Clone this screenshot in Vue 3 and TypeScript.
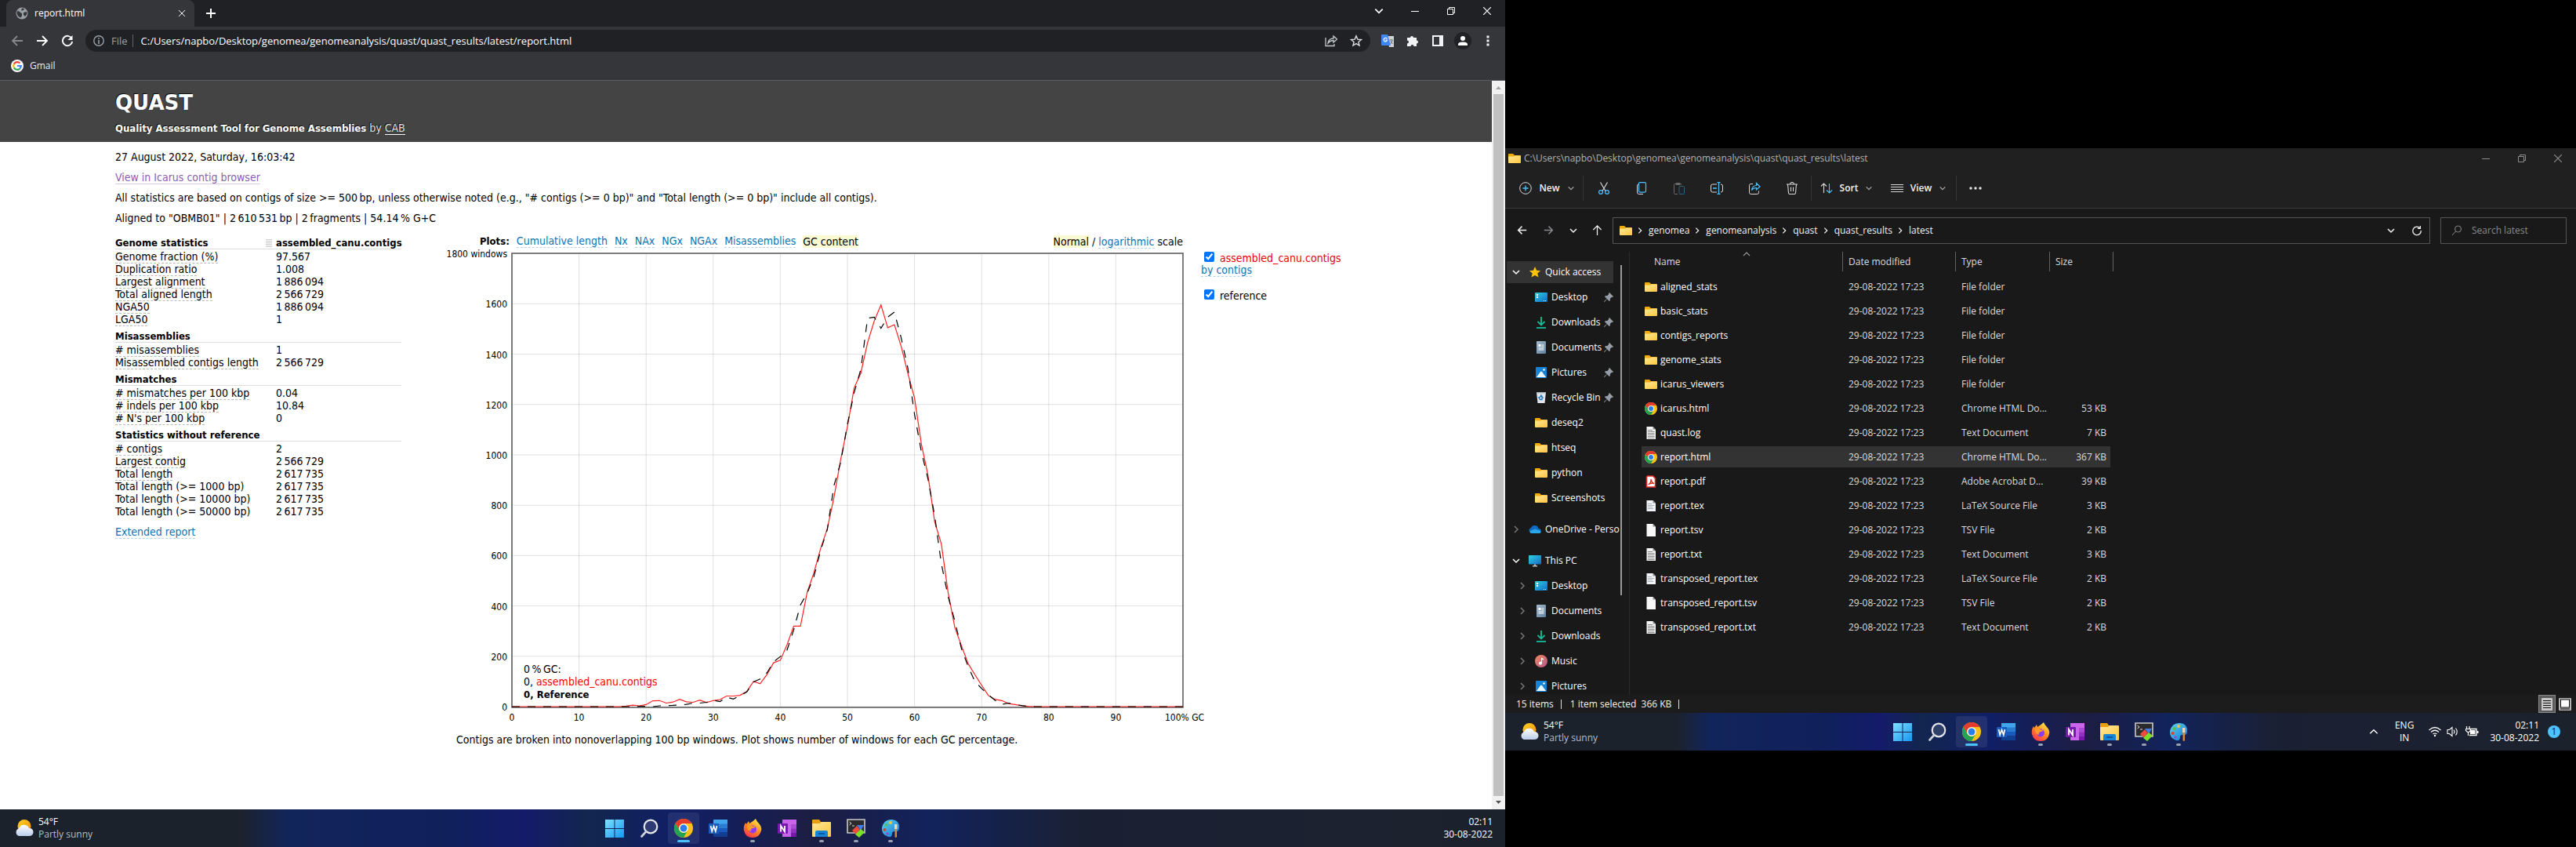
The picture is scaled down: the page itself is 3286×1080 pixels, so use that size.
<script setup lang="ts">
import { ref } from 'vue'

interface StatRow { label: string; value: string; plain?: boolean }
interface StatGroup { title: string; rows: StatRow[] }

const groups: StatGroup[] = [
  {
    title: 'Genome statistics',
    rows: [
      { label: 'Genome fraction (%)', value: '97.567' },
      { label: 'Duplication ratio', value: '1.008' },
      { label: 'Largest alignment', value: '1 886 094' },
      { label: 'Total aligned length', value: '2 566 729' },
      { label: 'NGA50', value: '1 886 094' },
      { label: 'LGA50', value: '1' },
    ],
  },
  {
    title: 'Misassemblies',
    rows: [
      { label: '# misassemblies', value: '1' },
      { label: 'Misassembled contigs length', value: '2 566 729' },
    ],
  },
  {
    title: 'Mismatches',
    rows: [
      { label: '# mismatches per 100 kbp', value: '0.04' },
      { label: '# indels per 100 kbp', value: '10.84' },
      { label: "# N's per 100 kbp", value: '0' },
    ],
  },
  {
    title: 'Statistics without reference',
    rows: [
      { label: '# contigs', value: '2' },
      { label: 'Largest contig', value: '2 566 729' },
      { label: 'Total length', value: '2 617 735' },
      { label: 'Total length (>= 1000 bp)', value: '2 617 735', plain: true },
      { label: 'Total length (>= 10000 bp)', value: '2 617 735', plain: true },
      { label: 'Total length (>= 50000 bp)', value: '2 617 735', plain: true },
    ],
  },
]
const thin = (value: string) => value.replace(/ /g, '\u2009')

const plots = ['Cumulative length', 'Nx', 'NAx', 'NGx', 'NGAx', 'Misassemblies']
const showContigs = ref(true)
const showReference = ref(true)

// Windows per GC percentage, starting at 16 %; zero before and after.
const firstPercent = 16
const contigs = [
  0, 2, 6, 3, 8, 23, 24, 14, 18, 29, 19, 17, 26, 16, 24, 28, 42, 42, 45, 60, 100, 91, 127, 174, 184, 246, 320, 320,
  454, 531, 628, 707, 832, 982, 1112, 1266, 1325, 1446, 1532, 1596, 1505, 1517, 1432, 1325, 1226, 1045, 920, 734,
  646, 454, 314, 241, 170, 127, 85, 44, 29, 24, 12, 8, 3, 1, 0,
]
const reference = [
  0, 0, 0, 1, 1, 0, 3, 4, 5, 7, 9, 14, 14, 17, 25, 20, 38, 30, 44, 58, 98, 110, 134, 178, 199, 225, 305, 404,
  450, 516, 620, 703, 879, 970, 1122, 1247, 1340, 1543, 1547, 1503, 1547, 1567, 1465, 1346, 1161, 1014, 905, 758,
  568, 438, 340, 230, 158, 100, 72, 47, 25, 9, 14, 8, 4, 1, 0,
]
const plot = { left: 88, top: 6, width: 856, height: 579, perWindow: 0.321 }
const px = (p: number) => plot.left + (p * plot.width) / 100
const py = (v: number) => plot.top + plot.height - 1 - v * plot.perWindow
function line(values: number[]): string {
  const points = values.map((v, i) => `${px(firstPercent + i).toFixed(1)},${py(v).toFixed(1)}`)
  return [`${px(0)},${py(0)}`, ...points, `${px(100)},${py(0)}`].join(' ')
}
const yTicks = [0, 200, 400, 600, 800, 1000, 1200, 1400, 1600]
const xTicks = [0, 10, 20, 30, 40, 50, 60, 70, 80, 90]

interface NavItem { label: string; icon: string; level: number; arrow?: string; pin?: boolean; gap?: boolean; active?: boolean }
const nav: NavItem[] = [
  { label: 'Quick access', icon: 'star', level: 0, arrow: 'down', active: true },
  { label: 'Desktop', icon: 'desktop', level: 1, pin: true },
  { label: 'Downloads', icon: 'download', level: 1, pin: true },
  { label: 'Documents', icon: 'document', level: 1, pin: true },
  { label: 'Pictures', icon: 'picture', level: 1, pin: true },
  { label: 'Recycle Bin', icon: 'bin', level: 1, pin: true },
  { label: 'deseq2', icon: 'folder', level: 1 },
  { label: 'htseq', icon: 'folder', level: 1 },
  { label: 'python', icon: 'folder', level: 1 },
  { label: 'Screenshots', icon: 'folder', level: 1 },
  { label: 'OneDrive - Perso', icon: 'cloud', level: 0, arrow: 'right', gap: true },
  { label: 'This PC', icon: 'pc', level: 0, arrow: 'down', gap: true },
  { label: 'Desktop', icon: 'desktop', level: 1, arrow: 'right' },
  { label: 'Documents', icon: 'document', level: 1, arrow: 'right' },
  { label: 'Downloads', icon: 'download', level: 1, arrow: 'right' },
  { label: 'Music', icon: 'music', level: 1, arrow: 'right' },
  { label: 'Pictures', icon: 'picture', level: 1, arrow: 'right' },
]

interface FileRow { name: string; icon: string; type: string; size: string; selected?: boolean }
const modified = '29-08-2022 17:23'
const files: FileRow[] = [
  { name: 'aligned_stats', icon: 'folder', type: 'File folder', size: '' },
  { name: 'basic_stats', icon: 'folder', type: 'File folder', size: '' },
  { name: 'contigs_reports', icon: 'folder', type: 'File folder', size: '' },
  { name: 'genome_stats', icon: 'folder', type: 'File folder', size: '' },
  { name: 'icarus_viewers', icon: 'folder', type: 'File folder', size: '' },
  { name: 'icarus.html', icon: 'chrome', type: 'Chrome HTML Do...', size: '53 KB' },
  { name: 'quast.log', icon: 'text', type: 'Text Document', size: '7 KB' },
  { name: 'report.html', icon: 'chrome', type: 'Chrome HTML Do...', size: '367 KB', selected: true },
  { name: 'report.pdf', icon: 'pdf', type: 'Adobe Acrobat D...', size: '39 KB' },
  { name: 'report.tex', icon: 'tex', type: 'LaTeX Source File', size: '3 KB' },
  { name: 'report.tsv', icon: 'blank', type: 'TSV File', size: '2 KB' },
  { name: 'report.txt', icon: 'text', type: 'Text Document', size: '3 KB' },
  { name: 'transposed_report.tex', icon: 'tex', type: 'LaTeX Source File', size: '2 KB' },
  { name: 'transposed_report.tsv', icon: 'blank', type: 'TSV File', size: '2 KB' },
  { name: 'transposed_report.txt', icon: 'text', type: 'Text Document', size: '2 KB' },
]

const crumbs = ['genomea', 'genomeanalysis', 'quast', 'quast_results', 'latest']

interface TaskApp { id: string; name: string; state?: string }
const apps: TaskApp[] = [
  { id: 'windows', name: 'Start' },
  { id: 'search', name: 'Search' },
  { id: 'chrome', name: 'Google Chrome', state: 'active' },
  { id: 'word', name: 'Word' },
  { id: 'firefox', name: 'Firefox', state: 'open' },
  { id: 'onenote', name: 'OneNote' },
  { id: 'explorer', name: 'File Explorer', state: 'open' },
  { id: 'terminal', name: 'Terminal', state: 'open' },
  { id: 'paint', name: 'Paint', state: 'open' },
]
</script>

<template>
  <svg class="sprites" aria-hidden="true">
    <defs>
      <linearGradient id="gFolder" x1="0" y1="0" x2="1" y2="1">
        <stop offset="0" stop-color="#ffe69a" /><stop offset="1" stop-color="#ffc83d" />
      </linearGradient>
      <linearGradient id="gTeal" x1="0" y1="0" x2="1" y2="1">
        <stop offset="0" stop-color="#2fd3e0" /><stop offset="1" stop-color="#1268c8" />
      </linearGradient>
      <linearGradient id="gDoc" x1="0" y1="0" x2="1" y2="1">
        <stop offset="0" stop-color="#a9bccf" /><stop offset="1" stop-color="#5f7f9f" />
      </linearGradient>
      <linearGradient id="gMusic" x1="0" y1="0" x2="1" y2="1">
        <stop offset="0" stop-color="#f08a5d" /><stop offset="1" stop-color="#b8568f" />
      </linearGradient>
      <linearGradient id="gWin" x1="0" y1="0" x2="1" y2="1">
        <stop offset="0" stop-color="#7fe0ff" /><stop offset="1" stop-color="#1498f0" />
      </linearGradient>
      <linearGradient id="gFox" x1="0.8" y1="0" x2="0.2" y2="1">
        <stop offset="0" stop-color="#fff04a" /><stop offset="0.5" stop-color="#ff8a1f" /><stop offset="1" stop-color="#ff2d55" />
      </linearGradient>
      <linearGradient id="gPaint" x1="0" y1="0" x2="1" y2="1">
        <stop offset="0" stop-color="#5fd3f5" /><stop offset="1" stop-color="#1277d0" />
      </linearGradient>
      <linearGradient id="gSun" x1="0" y1="0" x2="1" y2="1">
        <stop offset="0" stop-color="#ffd21f" /><stop offset="1" stop-color="#f08a10" />
      </linearGradient>
      <linearGradient id="gCloud" x1="0" y1="0" x2="0" y2="1">
        <stop offset="0" stop-color="#ffffff" /><stop offset="1" stop-color="#b9cdea" />
      </linearGradient>
    </defs>
    <symbol id="i-folder" viewBox="0 0 16 16">
      <path d="M0 3a1 1 0 0 1 1-1h5l2 2h7a1 1 0 0 1 1 1v8H0z" fill="#f3a90a" />
      <path d="M0 5.500h7L8.500 4.500H15a1 1 0 0 1 1 1V13a1 1 0 0 1-1 1H1a1 1 0 0 1-1-1z" fill="url(#gFolder)" />
    </symbol>
    <symbol id="i-star" viewBox="0 0 16 16">
      <path d="M8 1l2.100 4.700 5 .5-3.800 3.400 1.200 5L8 12l-4.500 2.600 1.200-5L.9 6.200l5-.5z" fill="#fcc20a" />
    </symbol>
    <symbol id="i-desktop" viewBox="0 0 16 16">
      <rect y="2" width="16" height="12" rx="1" fill="url(#gTeal)" />
      <path d="M2 4h2v2H2zM2 7h2v2H2z" fill="#fff" /><path d="M11 12h1v1h-1zM13 12h1v1h-1z" fill="#fff" />
    </symbol>
    <symbol id="i-download" viewBox="0 0 16 16">
      <path d="M3.500 7L8 11.500 12.500 7" fill="none" stroke="#1cb496" stroke-width="1.800" />
      <path d="M2 14h12v2H2z" fill="#17a88f" /><path d="M7.100 1h1.800v10H7.100z" fill="#1fbf8f" />
    </symbol>
    <symbol id="i-document" viewBox="0 0 16 16">
      <rect x="2" width="12" height="16" rx="1" fill="url(#gDoc)" />
      <path d="M4.500 4h3v3h-3zM8.500 4.500h3v1h-3zM8.500 6.500h3v1h-3zM4.500 8.500h7v1h-7zM4.500 10.500h7v1h-7z" fill="#fff" />
    </symbol>
    <symbol id="i-picture" viewBox="0 0 16 16">
      <rect x="1" y="1" width="14" height="14" rx="1" fill="#1583d8" /><path d="M2 14l5-7q1-1 2 0l5 7z" fill="#e9f6ff" />
      <circle cx="11.500" cy="4.500" r="1.300" fill="#fff" />
    </symbol>
    <symbol id="i-bin" viewBox="0 0 16 16">
      <path d="M2 1h12l-1.500 14h-9z" fill="#dfe5ea" /><path d="M2 1h12v1.500H2z" fill="#aeb7bf" />
      <path d="M8 5l2 3H9v2.500H6.500L5 8h1z" fill="none" stroke="#1a78d0" stroke-width="1.300" />
    </symbol>
    <symbol id="i-cloud" viewBox="0 0 16 16">
      <path d="M3.500 13A3.500 3.500 0 0 1 3 6.200 5 5 0 0 1 12.500 7 3 3 0 0 1 13 13z" fill="#0f6cc4" />
      <path d="M3 13q-2-1-1-3l6-2.500 4 1.500q4 .5 3.500 2.500-.5 1.500-2.500 1.500z" fill="#28a8ea" />
    </symbol>
    <symbol id="i-pc" viewBox="0 0 16 16">
      <rect y="1" width="16" height="11.500" rx="1" fill="url(#gTeal)" /><path d="M7 12.500h2V14h2v1.500H5V14h2z" fill="#b8c4cc" />
    </symbol>
    <symbol id="i-music" viewBox="0 0 16 16">
      <circle cx="8" cy="8" r="8" fill="url(#gMusic)" /><path d="M8 3.500l3 1.500v1.500L9 5.700V10.500a2 2 0 1 1-1-1.600z" fill="#fff" />
    </symbol>
    <symbol id="i-chrome" viewBox="0 0 24 24">
      <circle cx="12" cy="12" r="12" fill="#fbc116" />
      <path d="M1.600 6A12 12 0 0 1 22.400 6H12a6 6 0 0 0-5.200 9z" fill="#e33b2e" />
      <path d="M1.600 6A12 12 0 0 0 12 24l5.200-9A6 6 0 0 1 6.800 15z" fill="#23a455" />
      <circle cx="12" cy="12" r="5.800" fill="#fff" /><circle cx="12" cy="12" r="4.500" fill="#2b7de9" />
    </symbol>
    <symbol id="i-blank" viewBox="0 0 16 16">
      <path d="M2.500 0h8L14 3.500V16H2.500z" fill="#f7f7f7" /><path d="M10.500 0L14 3.500h-3.500z" fill="#8d8d8d" />
    </symbol>
    <symbol id="i-text" viewBox="0 0 16 16">
      <path d="M2.500 0h8L14 3.500V16H2.500z" fill="#f4f4f4" /><path d="M10.500 0L14 3.500h-3.500z" fill="#8d8d8d" />
      <path d="M4 4.500h6M4 6.500h8.500M4 8.500h8.500M4 10.500h8.500M4 12.500h8.500M4 14.500h8.500" stroke="#888" />
    </symbol>
    <symbol id="i-tex" viewBox="0 0 16 16">
      <path d="M2.500 1h8L14 4.500V15H2.500z" fill="#f0f2f5" /><path d="M10.500 1L14 4.500h-3.500z" fill="#8d8d8d" />
      <path d="M4 5.500h5M4 7.500h8M4 9.500h6M4 11.500h7" stroke="#aab2bc" />
    </symbol>
    <symbol id="i-pdf" viewBox="0 0 16 16">
      <path d="M3.500 1h7l3 3v11h-11V2z" fill="#fff" stroke="#e02b20" stroke-width="1.600" />
      <path d="M4.500 12q4-2 3.500-7 1 5 4 5.500-4-1-7.500 1.500z" fill="#fff" stroke="#e02b20" stroke-width="1.300" />
    </symbol>
    <symbol id="i-pin" viewBox="0 0 12 12">
      <path d="M7 0l5 5-1 1-1-.3L7.800 8 8 10 6.800 11 4 8.200.8 12 0 11.200 3.800 8 1 5.200 2 4l2 .2L6.300 2 6 1z" fill="#949ea8" />
    </symbol>
    <symbol id="i-windows" viewBox="0 0 24 24">
      <path d="M0 1h11.500v11H0zM12.500 1H24v11H12.500zM0 13h11.500v11H0zM12.500 13H24v11H12.500z" fill="url(#gWin)" />
    </symbol>
    <symbol id="i-search" viewBox="0 0 24 24">
      <circle cx="14" cy="10" r="8.300" fill="#ffffff20" stroke="#e3e4ea" stroke-width="2.200" />
      <path d="M8 16.500l-5.500 6" stroke="#d0d2d8" stroke-width="2.600" stroke-linecap="round" />
    </symbol>
    <symbol id="i-word" viewBox="0 0 24 24">
      <path d="M6 1h18v6H6z" fill="#41a5ee" /><path d="M6 6.500h18V12H6z" fill="#2b7cd3" />
      <path d="M6 12h18v5.500H6z" fill="#185abd" /><path d="M6 17.500h18V23H6z" fill="#103f91" />
      <rect y="6" width="13" height="13" rx="1" fill="#185abd" />
      <path d="M2.500 9l1.700 7 2.300-6.500L8.800 16l1.700-7" fill="none" stroke="#fff" stroke-width="1.700" />
    </symbol>
    <symbol id="i-firefox" viewBox="0 0 24 24">
      <path d="M16 0q1 3 4 6 4 4 3 9-2 9-11 9T1 15q-1-5 2-10l1 2 3-4 1 3q5-3 8-6z" fill="url(#gFox)" />
      <circle cx="12" cy="13.500" r="5" fill="#8a3df0" /><path d="M5 9q4-2 6 0 2 1 5 0-1 3-4 3-3 1-2 4-5-1-5-7z" fill="#ff9b2a" />
    </symbol>
    <symbol id="i-onenote" viewBox="0 0 24 24">
      <path d="M6 1h18v22H6z" fill="#ca64ea" /><path d="M17 7h7v5.500h-7z" fill="#ae4bd5" />
      <path d="M17 12.500h7V18h-7z" fill="#9332bf" /><path d="M17 18h7v5h-7z" fill="#7719aa" />
      <rect y="6" width="13" height="13" rx="1" fill="#7719aa" />
      <path d="M4 16.500V9l5 7.500V9" fill="none" stroke="#fff" stroke-width="1.800" />
    </symbol>
    <symbol id="i-explorer" viewBox="0 0 24 24">
      <path d="M0 2a1 1 0 0 1 1-1h8l2 3h12v8H0z" fill="#e9a010" />
      <path d="M0 6h10l1.500-2H23a1 1 0 0 1 1 1v17a1 1 0 0 1-1 1H1a1 1 0 0 1-1-1z" fill="url(#gFolder)" />
      <path d="M4 23v-6q0-2 2-2h12q2 0 2 2v6z" fill="#1685d8" /><path d="M8 18h8v2H8z" fill="#0c58a4" />
    </symbol>
    <symbol id="i-terminal" viewBox="0 0 24 24">
      <path d="M1 1h22v17H1z" fill="#2b2b2e" stroke="#c9c9c9" stroke-width="1.600" />
      <path d="M3.500 4l2.500 2-2.500 2M7 9h3" fill="none" stroke="#ddd" />
      <path d="M13 8h9l-4 7z" fill="#3f7df0" /><path d="M7 15l6-6 4 5-5 6z" fill="#f04a3c" /><path d="M11 20l7-7 5 4-7 7z" fill="#7ae02a" />
    </symbol>
    <symbol id="i-paint" viewBox="0 0 24 24">
      <path d="M14 1Q24 2 23 12q-.5 5-5 4-4-.5-4 3 0 5-5 4Q0 20 1 11 4 0 14 1z" fill="url(#gPaint)" />
      <circle cx="12" cy="5" r="2" fill="#f7c62a" /><circle cx="6.500" cy="8" r="2" fill="#4fc24a" />
      <circle cx="4.500" cy="14" r="2" fill="#d8452e" /><circle cx="8" cy="19" r="1.800" fill="#8a4fd0" />
      <path d="M17.500 13h2.500v10q-1.200 2-2.500 0z" fill="#d88a3a" /><path d="M17 7h3.500v6H17z" fill="#e9d5b8" />
    </symbol>
    <symbol id="i-weather" viewBox="0 0 24 24">
      <circle cx="12" cy="9.500" r="8.500" fill="url(#gSun)" />
      <path d="M5 22A5 5 0 0 1 5 12.500 7 7 0 0 1 18 12 5 5 0 0 1 19 22z" fill="url(#gCloud)" />
    </symbol>
    <symbol id="i-left" viewBox="0 0 16 16"><path d="M15 8H2M8 2L2 8l6 6" fill="none" stroke="currentColor" stroke-width="1.800" /></symbol>
    <symbol id="i-right" viewBox="0 0 16 16"><path d="M1 8h13M8 2l6 6-6 6" fill="none" stroke="currentColor" stroke-width="1.800" /></symbol>
    <symbol id="i-up" viewBox="0 0 16 16"><path d="M8 15V2M2.500 7.500L8 2l5.500 5.500" fill="none" stroke="currentColor" stroke-width="1.300" /></symbol>
    <symbol id="i-chevdown" viewBox="0 0 12 12"><path d="M2 4l4 4 4-4" fill="none" stroke="currentColor" stroke-width="1.500" /></symbol>
    <symbol id="i-chevright" viewBox="0 0 12 12"><path d="M4 2l4 4-4 4" fill="none" stroke="currentColor" stroke-width="1.500" /></symbol>
    <symbol id="i-chevup" viewBox="0 0 12 12"><path d="M2 8l4-4 4 4" fill="none" stroke="currentColor" stroke-width="1.200" /></symbol>
    <symbol id="i-reload" viewBox="0 0 16 16">
      <path d="M13.500 5A6.200 6.200 0 1 0 14.200 9" fill="none" stroke="currentColor" stroke-width="1.900" /><path d="M14.500 1v6h-6z" fill="currentColor" />
    </symbol>
    <symbol id="i-refresh" viewBox="0 0 16 16">
      <path d="M12.500 4.500A6 6 0 1 0 14 8M13 1v4H9" fill="none" stroke="currentColor" stroke-width="1.500" />
    </symbol>
    <symbol id="i-min" viewBox="0 0 10 10"><path d="M0 5.500h10" stroke="currentColor" /></symbol>
    <symbol id="i-restore" viewBox="0 0 10 10"><path d="M.5 2.500h7v7h-7zM2.500 2.500v-2h7v7h-2" fill="none" stroke="currentColor" /></symbol>
    <symbol id="i-close" viewBox="0 0 10 10"><path d="M0 0l10 10M10 0L0 10" stroke="currentColor" stroke-width="1.200" /></symbol>
  </svg>

  <div class="desktops">
    <section class="screen">
      <header class="tabs">
        <div class="tab">
          <svg class="ic16" viewBox="0 0 16 16"><circle cx="8" cy="8" r="7.500" fill="#9aa0a6" /><path d="M2 5q3 0 4 2l2 1v3l-1.500 2.500Q2 12 1.500 8zM8 1.500l3 .5-1 2-3 .5zM10 7l4-1 .5 3-2.500 3-2-2z" fill="#35363a" /></svg>
          <span class="tab-title">report.html</span>
          <button class="plain tab-close" aria-label="Close tab"><svg width="8" height="8"><use href="#i-close" /></svg></button>
        </div>
        <button class="plain new-tab" aria-label="New tab"><svg width="12" height="12" viewBox="0 0 12 12"><path d="M6 0v12M0 6h12" stroke="#fff" stroke-width="2" /></svg></button>
        <div class="win-controls">
          <button class="plain" aria-label="Search tabs"><svg width="14" height="14"><use href="#i-chevdown" /></svg></button>
          <button class="plain" aria-label="Minimize"><svg width="10" height="10"><use href="#i-min" /></svg></button>
          <button class="plain" aria-label="Restore"><svg width="10" height="10"><use href="#i-restore" /></svg></button>
          <button class="plain" aria-label="Close"><svg width="10" height="10"><use href="#i-close" /></svg></button>
        </div>
      </header>
      <div class="toolbar">
        <button class="plain tool dim" aria-label="Back"><svg width="16" height="16"><use href="#i-left" /></svg></button>
        <button class="plain tool" aria-label="Forward"><svg width="16" height="16"><use href="#i-right" /></svg></button>
        <button class="plain tool" aria-label="Reload"><svg width="16" height="16"><use href="#i-reload" /></svg></button>
        <div class="omnibox">
          <svg class="ic14" viewBox="0 0 14 14"><circle cx="7" cy="7" r="6.200" fill="none" stroke="#9aa0a6" stroke-width="1.400" /><path d="M7 3v1.700M7 6v5" stroke="#9aa0a6" stroke-width="1.600" /></svg>
          <span class="scheme">File</span>
          <input class="url" aria-label="Address" value="C:/Users/napbo/Desktop/genomea/genomeanalysis/quast/quast_results/latest/report.html">
          <button class="plain tool" aria-label="Share"><svg width="16" height="16" viewBox="0 0 16 16"><path d="M1 4v10.500h11V12M4 11q1-6 7-6V2l4.500 4L11 10V7.500q-4 0-7 3.500z" fill="none" stroke="#c4c7ca" stroke-width="1.300" /></svg></button>
          <button class="plain tool" aria-label="Bookmark"><svg width="16" height="16" viewBox="0 0 16 16"><path d="M8 1.800l1.800 4.300 4.700.4-3.600 3 1.100 4.600L8 11.600l-4 2.500 1.100-4.600-3.600-3 4.700-.4z" fill="none" stroke="#dadce0" stroke-width="1.400" /></svg></button>
        </div>
        <div class="extensions">
          <button class="plain tool" aria-label="Translate"><svg width="16" height="16" viewBox="0 0 16 16"><path d="M7 2h9v14h-6z" fill="#cfd3d6" /><path d="M10.500 7h4.500M12.500 6v1M11 12q3-1 3-5M11.500 8.500l3 3.500" stroke="#6d7880" fill="none" /><path d="M0 0h8l4 14H1a1 1 0 0 1-1-1z" fill="#4285f4" /><path d="M7.500 5.500A2.300 2.300 0 1 0 7.300 8V7H5.500" fill="none" stroke="#fff" stroke-width="1.200" /></svg></button>
          <button class="plain tool" aria-label="Extensions"><svg width="16" height="16" viewBox="0 0 16 16"><path d="M1 4h4a2 2 0 1 1 4 0h4v3.500a2 2 0 1 1 0 4V15H9.500a2 2 0 0 0-4 0H1v-3.500a2 2 0 0 0 0-4z" fill="#f1f3f4" /></svg></button>
          <button class="plain tool" aria-label="Side panel"><svg width="14" height="14" viewBox="0 0 14 14"><path d="M0 0h14v14H0zM2 2v10h7V2z" fill="#f1f3f4" fill-rule="evenodd" /></svg></button>
          <button class="plain tool" aria-label="Profile"><svg width="22" height="22" viewBox="0 0 22 22"><circle cx="11" cy="11" r="11" fill="#202124" /><circle cx="11" cy="8" r="3" fill="#fff" /><path d="M5 17v-1.500q0-3 6-3t6 3V17z" fill="#fff" /></svg></button>
          <button class="plain tool" aria-label="Menu"><svg width="4" height="14" viewBox="0 0 4 14"><path d="M.5.500h3v3h-3zM.5 5.500h3v3h-3zM.5 10.500h3v3h-3z" fill="#f1f3f4" /></svg></button>
        </div>
      </div>
      <nav class="bookmarks">
        <a href="#" class="bookmark">
          <svg class="ic16" viewBox="0 0 16 16"><circle cx="8" cy="8" r="8" fill="#fff" /><g fill="none" stroke-width="2.200"><path d="M3.800 5.600A4.800 4.800 0 0 1 11.400 4.600" stroke="#ea4335" /><path d="M3.800 5.600a4.800 4.800 0 0 0 0 4.800" stroke="#fbbc05" /><path d="M3.800 10.400a4.800 4.800 0 0 0 7.400 1.200" stroke="#34a853" /><path d="M11.200 11.600A4.800 4.800 0 0 0 12.800 8H8" stroke="#4285f4" /></g></svg>
          Gmail
        </a>
      </nav>

      <div class="viewport">
        <main class="report">
          <header class="banner">
            <h1>QUAST</h1>
            <p><strong>Quality Assessment Tool for Genome Assemblies</strong> by <a href="#">CAB</a></p>
          </header>
          <div class="intro">
            <p>27 August 2022, Saturday, 16:03:42</p>
            <p><a href="#" class="visited">View in Icarus contig browser</a></p>
            <p>All statistics are based on contigs of size &gt;= 500&thinsp;bp, unless otherwise noted (e.g., "# contigs (&gt;= 0 bp)" and "Total length (&gt;= 0 bp)" include all contigs).</p>
            <p>Aligned to "OBMB01" | 2&thinsp;610&thinsp;531&thinsp;bp | 2&thinsp;fragments | 54.14&thinsp;% G+C</p>
          </div>
          <div class="results">
            <div class="stats">
              <table>
                <colgroup><col class="c-label"><col></colgroup>
                <tbody v-for="(g, gi) in groups" :key="g.title">
                  <tr class="group">
                    <th scope="col">{{ g.title }}</th>
                    <th scope="col"><span v-if="gi === 0" class="assembly"><i class="grip"></i>assembled_canu.contigs</span></th>
                  </tr>
                  <tr v-for="r in g.rows" :key="r.label">
                    <td><span :class="{ hint: !r.plain }">{{ r.label }}</span></td>
                    <td>{{ thin(r.value) }}</td>
                  </tr>
                </tbody>
              </table>
              <a href="#" class="dashed">Extended report</a>
            </div>
            <div class="plot">
              <div class="plot-nav">
                <strong>Plots:</strong>
                <a v-for="p in plots" :key="p" href="#" class="dashed">{{ p }}</a>
                <span class="mark">GC content</span>
                <span class="scale"><span class="mark">Normal</span> / <a href="#" class="dashed">logarithmic</a> scale</span>
              </div>
              <svg class="chart" viewBox="0 0 980 606" role="img" aria-label="GC content plot">
                <g class="grid">
                  <line v-for="t in yTicks" :key="'h' + t" :x1="plot.left" :x2="plot.left + plot.width" :y1="py(t)" :y2="py(t)" />
                  <line v-for="t in xTicks" :key="'v' + t" :x1="px(t)" :x2="px(t)" :y1="plot.top" :y2="plot.top + plot.height" />
                </g>
                <rect class="frame" :x="plot.left" :y="plot.top" :width="plot.width" :height="plot.height" />
                <polyline v-if="showContigs" :points="line(contigs)" class="red" />
                <polyline v-if="showReference" :points="line(reference)" class="ref" />
                <g class="tick end">
                  <text v-for="t in yTicks" :key="'y' + t" x="82" :y="py(t) + 5">{{ t }}</text>
                  <text x="82" y="11">1800 windows</text>
                </g>
                <g class="tick mid">
                  <text v-for="t in xTicks" :key="'x' + t" :x="px(t)" y="602">{{ t }}</text>
                  <text x="946" y="602">100% GC</text>
                </g>
                <g class="tip">
                  <text x="103" y="541">0&#8201;%&#8201;GC:</text>
                  <text x="103" y="557">0, <tspan fill="#f00">assembled_canu.contigs</tspan></text>
                  <text x="103" y="573" class="strong">0, Reference</text>
                </g>
              </svg>
              <p class="caption">Contigs are broken into nonoverlapping 100 bp windows. Plot shows number of windows for each GC percentage.</p>
            </div>
            <div class="legend">
              <label class="red-label"><input v-model="showContigs" type="checkbox">assembled_canu.contigs</label>
              <a href="#" class="dashed">by contigs</a>
              <label><input v-model="showReference" type="checkbox">reference</label>
            </div>
          </div>
        </main>
        <div class="scrollbar" aria-hidden="true">
          <svg width="17" height="17" viewBox="0 0 17 17"><path d="M5 11l3.500-4 3.500 4z" fill="#a3a3a3" /></svg>
          <div class="thumb"></div>
          <svg width="17" height="17" viewBox="0 0 17 17"><path d="M5 6l3.500 4L12 6z" fill="#505050" /></svg>
        </div>
      </div>

      <footer class="taskbar">
        <div class="weather">
          <svg width="24" height="24"><use href="#i-weather" /></svg>
          <span>54°F<br><small>Partly sunny</small></span>
        </div>
        <div class="apps">
          <button v-for="a in apps" :key="a.id" :class="['plain', 'app', a.state]" :aria-label="a.name"><svg width="24" height="24"><use :href="'#i-' + a.id" /></svg></button>
        </div>
        <div class="tray"><span class="clock">02:11<br>30-08-2022</span></div>
      </footer>
    </section>

    <section class="screen second">
      <div class="explorer">
        <header class="titlebar">
          <svg class="ic16"><use href="#i-folder" /></svg>
          <span>C:\Users\napbo\Desktop\genomea\genomeanalysis\quast\quast_results\latest</span>
          <div class="win-controls">
            <button class="plain" aria-label="Minimize"><svg width="10" height="10"><use href="#i-min" /></svg></button>
            <button class="plain" aria-label="Restore"><svg width="10" height="10"><use href="#i-restore" /></svg></button>
            <button class="plain" aria-label="Close"><svg width="10" height="10"><use href="#i-close" /></svg></button>
          </div>
        </header>
        <div class="commands">
          <button class="plain command new"><svg width="16" height="16" viewBox="0 0 16 16" fill="none"><circle cx="8" cy="8" r="7.300" stroke="#d8d8d8" /><path d="M8 4.500v7M4.500 8h7" stroke="#4cc2ff" stroke-width="1.300" /></svg>New<svg class="chev" width="10" height="10"><use href="#i-chevdown" /></svg></button>
          <button class="plain icon-command" aria-label="Cut"><svg width="16" height="16" viewBox="0 0 16 16" fill="none"><path d="M3.500.5l6.500 11M12.500.5L6 11.500" stroke="#d8d8d8" stroke-width="1.200" /><circle cx="4" cy="13" r="2.400" stroke="#4cc2ff" stroke-width="1.200" /><circle cx="12" cy="13" r="2.400" stroke="#4cc2ff" stroke-width="1.200" /></svg></button>
          <button class="plain icon-command" aria-label="Copy"><svg width="16" height="16" viewBox="0 0 16 16" fill="none"><path d="M4 3Q2.500 3 2.500 5v8q0 2.500 2 2.500H10" stroke="#d8d8d8" /><rect x="4.500" y=".6" width="9" height="12.500" rx="1.500" stroke="#4cc2ff" stroke-width="1.200" /></svg></button>
          <button class="plain icon-command faded" aria-label="Paste"><svg width="16" height="16" viewBox="0 0 16 16" fill="none"><path d="M6 15.500H2.500q-1 0-1-1v-11q0-1 1-1H10q1 0 1 1M4 3.500v-2h5v2z" stroke="#d8d8d8" /><rect x="8" y="5.500" width="6.500" height="10" rx="1" stroke="#4cc2ff" /></svg></button>
          <button class="plain icon-command" aria-label="Rename"><svg width="16" height="16" viewBox="0 0 16 16" fill="none"><path d="M8 13H2.500Q.5 13 .5 11V5q0-2 2-2H8M13 3q2.500 0 2.500 2v6q0 2-2.500 2" stroke="#d8d8d8" /><path d="M10.500.5v15M8.500.5h4M8.500 15.500h4M3 8h5" stroke="#4cc2ff" stroke-width="1.300" /></svg></button>
          <button class="plain icon-command" aria-label="Share"><svg width="16" height="16" viewBox="0 0 16 16" fill="none"><path d="M6 2.500H3.500q-2 0-2 2v9q0 2 2 2h8q2 0 2-2v-2" stroke="#d8d8d8" /><path d="M4.500 10.500q1-6 6-6V1.500L15 6l-4.500 4V7.500q-4 0-6 3z" stroke="#4cc2ff" stroke-width="1.200" /></svg></button>
          <button class="plain icon-command" aria-label="Delete"><svg width="16" height="16" viewBox="0 0 16 16" fill="none"><path d="M1 3h14M5.500 3q0-2.500 2.500-2.500T10.500 3M2.500 3l1 11q.2 1.500 1.500 1.500h6q1.300 0 1.500-1.500l1-11M6.500 6.500v5.500M9.500 6.500v5.500" stroke="#d8d8d8" stroke-width="1.100" /></svg></button>
          <button class="plain command sort"><svg width="16" height="16" viewBox="0 0 16 16" fill="none"><path d="M4.500 14V2M1 5.500L4.500 2 8 5.500" stroke="#d8d8d8" stroke-width="1.100" /><path d="M11.500 2v12M8 10.500l3.500 3.500 3.500-3.500" stroke="#4cc2ff" stroke-width="1.100" /></svg>Sort<svg class="chev" width="10" height="10"><use href="#i-chevdown" /></svg></button>
          <button class="plain command view"><svg width="16" height="16" viewBox="0 0 16 16"><path d="M0 3.500h16M0 6.500h16M0 9.500h16M0 12.500h16" stroke="#d8d8d8" /></svg>View<svg class="chev" width="10" height="10"><use href="#i-chevdown" /></svg></button>
          <button class="plain more" aria-label="See more"><svg width="16" height="4" viewBox="0 0 16 4" fill="#e4e4e4"><circle cx="2" cy="2" r="1.700" /><circle cx="8" cy="2" r="1.700" /><circle cx="14" cy="2" r="1.700" /></svg></button>
        </div>
        <div class="address-row">
          <button class="plain nav-btn" aria-label="Back"><svg width="13" height="13"><use href="#i-left" /></svg></button>
          <button class="plain nav-btn dim" aria-label="Forward"><svg width="13" height="13"><use href="#i-right" /></svg></button>
          <button class="plain nav-btn narrow" aria-label="Recent"><svg width="12" height="12"><use href="#i-chevdown" /></svg></button>
          <button class="plain nav-btn narrow" aria-label="Up"><svg width="15" height="15"><use href="#i-up" /></svg></button>
          <div class="path">
            <svg class="ic16"><use href="#i-folder" /></svg>
            <template v-for="c in crumbs" :key="c">
              <svg class="sep" width="10" height="10"><use href="#i-chevright" /></svg>
              <button class="plain">{{ c }}</button>
            </template>
            <button class="plain path-tool first" aria-label="Previous locations"><svg width="12" height="12"><use href="#i-chevdown" /></svg></button>
            <button class="plain path-tool" aria-label="Refresh"><svg width="14" height="14"><use href="#i-refresh" /></svg></button>
          </div>
          <label class="search">
            <svg width="14" height="14" viewBox="0 0 14 14" fill="none" stroke="#8a8a8a"><circle cx="8.500" cy="5" r="4" /><path d="M5.500 8L1 13" /></svg>
            <input type="search" aria-label="Search latest" placeholder="Search latest">
          </label>
        </div>
        <div class="body">
          <nav class="side">
            <a v-for="(n, i) in nav" :key="i" href="#" :class="['nav-item', 'level' + n.level, { active: n.active, gap: n.gap }]">
              <span class="arrow"><svg v-if="n.arrow" :class="n.arrow" width="12" height="12"><use :href="'#i-chev' + n.arrow" /></svg></span>
              <svg class="ic16"><use :href="'#i-' + n.icon" /></svg>
              <span class="nav-label">{{ n.label }}</span>
              <svg v-if="n.pin" class="pin" width="12" height="12"><use href="#i-pin" /></svg>
            </a>
          </nav>
          <div class="side-scroll"><div></div></div>
          <div class="list">
            <table>
              <colgroup><col class="c-name"><col class="c-date"><col class="c-type"><col class="c-size"></colgroup>
              <thead>
                <tr>
                  <th scope="col">Name<svg class="sorted" width="12" height="12"><use href="#i-chevup" /></svg></th>
                  <th scope="col">Date modified</th>
                  <th scope="col">Type</th>
                  <th scope="col">Size</th>
                </tr>
              </thead>
              <tbody>
                <tr v-for="f in files" :key="f.name" :class="{ selected: f.selected }">
                  <td><span class="file"><svg class="ic16"><use :href="'#i-' + f.icon" /></svg>{{ f.name }}</span></td>
                  <td>{{ modified }}</td>
                  <td>{{ f.type }}</td>
                  <td>{{ f.size }}</td>
                </tr>
              </tbody>
            </table>
          </div>
        </div>
        <footer class="status">
          <span>15 items</span><i></i><span>1 item selected&nbsp; 366 KB</span><i></i>
          <div class="view-modes">
            <button class="plain on" aria-label="Details"><svg width="16" height="18" viewBox="0 0 16 18"><rect x="1" y="1" width="14" height="16" rx="1" fill="#c8c8c8" /><path d="M3 4.500h10M3 7.500h10M3 10.500h10M3 13.500h10" stroke="#111" /></svg></button>
            <button class="plain" aria-label="Large icons"><svg width="16" height="18" viewBox="0 0 16 18"><rect x="0" y="1" width="16" height="16" rx="1" fill="#b4b4b4" /><rect x="2.500" y="3" width="11" height="10" fill="#fff" stroke="#111" /><path d="M2 15h12" stroke="#111" /></svg></button>
          </div>
        </footer>
      </div>
      <footer class="taskbar">
        <div class="weather">
          <svg width="24" height="24"><use href="#i-weather" /></svg>
          <span>54°F<br><small>Partly sunny</small></span>
        </div>
        <div class="apps">
          <button v-for="a in apps" :key="a.id" :class="['plain', 'app', a.state]" :aria-label="a.name"><svg width="24" height="24"><use :href="'#i-' + a.id" /></svg></button>
        </div>
        <div class="tray">
          <svg width="14" height="14"><use href="#i-chevup" /></svg>
          <span class="lang">ENG<br>IN</span>
          <svg class="status-icons" width="64" height="16" viewBox="0 0 64 16" fill="none" stroke="#fff">
            <path d="M.5 6Q8-1 15.500 6M3 8.500q5-4.500 10 0M5.500 11q2.500-2 5 0" stroke-width="1.200" /><circle cx="8" cy="13" r="1.200" fill="#fff" stroke="none" />
            <path d="M24 5.500h2.500L30 2.500v11l-3.500-3H24zM32 5.500q2 2.500 0 5M34.500 3.500q3.500 4.500 0 9" stroke-width="1.100" />
            <path d="M52 4.500h9v8h-9" stroke-width="1.300" /><path d="M53 6h6.500v5H53zM61.500 7h2v3h-2z" fill="#fff" stroke="none" /><path d="M48.500 1v3M52 1v3M47.500 4.500h6v2l-2 2h-2l-2-2zM50.500 8v5" stroke-width="1.200" />
          </svg>
          <span class="clock">02:11<br>30-08-2022</span>
          <span class="badge">1</span>
        </div>
      </footer>
    </section>
  </div>
</template>

<style>
body { margin: 0; background: #000; }
</style>

<style scoped>
* { box-sizing: border-box; }
.sprites { position: absolute; width: 0; height: 0; }
.desktops { display: grid; grid-template-columns: minmax(0, 1920fr) minmax(0, 1366fr); grid-template-rows: minmax(0, 1fr); height: 100vh; font: 12px/16px "Open Sans", "Noto Sans", sans-serif; color: #fff; }
.screen { display: flex; flex-direction: column; min-height: 0; overflow: hidden; }
.plain { display: inline-flex; align-items: center; justify-content: center; flex: none; padding: 0; border: 0; background: none; color: inherit; font: inherit; }
.ic16 { width: 16px; height: 16px; flex: none; }
.ic14 { width: 14px; height: 14px; flex: none; }
a { text-decoration: none; }

/* browser */
.tabs { display: flex; flex: none; height: 34px; padding-left: 8px; background: #202124; }
.tab { display: flex; align-items: center; width: 240px; padding: 0 12px; border-radius: 8px 8px 0 0; background: #35363a; }
.tab-title { flex: 1; margin-left: 8px; }
.new-tab { width: 42px; }
.win-controls { display: flex; margin-left: auto; }
.win-controls button { width: 46px; height: 28px; }
.toolbar { display: flex; flex: none; align-items: center; height: 36px; padding: 0 6px; background: #35363a; }
.tool { width: 32px; height: 28px; }
.dim { color: #85878a; }
.omnibox { display: flex; flex: 1; align-items: center; height: 28px; margin-left: 7px; padding: 0 2px 0 10px; border-radius: 14px; background: #202124; font-size: 13px; }
.scheme { margin-left: 9px; padding-right: 6px; border-right: 1px solid #5f6368; color: #9aa0a6; }
.url { flex: 1; min-width: 0; padding: 0 0 0 10px; border: 0; background: none; color: #fff; font: inherit; }
.extensions { display: flex; margin-left: 6px; }
.bookmarks { display: flex; flex: none; align-items: center; height: 33px; padding: 0 14px 4px; border-bottom: 1px solid #5c5d60; background: #35363a; }
.bookmark { display: flex; align-items: center; gap: 8px; color: #e8eaed; }
.viewport { display: flex; flex: 1; min-height: 0; background: #fff; }
.scrollbar { display: flex; flex-direction: column; flex: none; width: 17px; background: #f1f1f1; }
.thumb { flex: 1; margin: 0 2px; background: #c1c1c1; }

/* report page */
.report { flex: 1; min-width: 0; overflow: hidden; color: #000; font: 14px/16px "DejaVu Sans Condensed", "DejaVu Sans", sans-serif; }
.report p { margin: 0; }
.report strong, .stats th { font-size: 13px; }
.banner { height: 78px; padding: 12px 147px 0; background: #444; color: #fff; text-shadow: -1px -1px 0 #111; }
.banner h1 { margin: 0 0 8px; font-family: "DejaVu Sans", sans-serif; font-size: 26px; line-height: 32px; }
.banner a { border-bottom: 1px solid #fff; color: #ddd; }
.banner p { color: #ddd; }
.banner strong { color: #fff; }
.intro { padding: 11px 147px 0; }
.intro p { margin-bottom: 10px; }
.visited { border-bottom: 1px solid #dccbe6; color: #8a5fb0; }
.results { display: flex; padding: 0 0 0 147px; }
.stats { flex: 0 0 365px; }
.stats table { table-layout: fixed; width: 100%; margin-bottom: 10px; border-spacing: 0; }
.c-label { width: 205px; }
.stats td, .stats th { height: 16px; padding: 0; text-align: left; white-space: nowrap; }
.stats .group th { height: 23px; padding-bottom: 2px; vertical-align: bottom; background: linear-gradient(#ddd, #ddd) 0 21px / 100% 1px no-repeat; }
.assembly { position: relative; }
.grip { position: absolute; left: -13px; top: 3px; width: 8px; height: 10px; background: repeating-linear-gradient(#d2d2d2 0 1px, #eee 1px 3px); }
.hint { border-bottom: 1px dashed #bbb; }
.dashed { border-bottom: 1px dashed #b5d5e8; color: #0a74b2; }
.stats td, .stats th, .dashed, .hint { line-height: 15px; }
.plot { flex: 0 1 980px; min-width: 0; margin-left: 53px; }
.plot-nav { display: flex; gap: 9px; height: 21px; padding: 4px 36px 0 47px; white-space: nowrap; }
.plot-nav .dashed { height: 16px; }
.scale { margin-left: auto; }
.mark { height: 16px; background: #fafad2; }
.chart { display: block; width: 100%; height: auto; }
.grid line { stroke: #000; stroke-opacity: 0.12; }
.frame { fill: none; stroke: #545454; stroke-width: 1.500; }
.red { fill: none; stroke: #f22; stroke-width: 1.200; }
.ref { fill: none; stroke: #000; stroke-width: 1.200; stroke-dasharray: 10 10; }
.tick { font-size: 12px; }
.end { text-anchor: end; }
.mid { text-anchor: middle; }
.strong { font-size: 13px; font-weight: bold; }
.plot .caption { margin: 12px 0 0 17px; }
.legend { display: flex; flex-direction: column; align-items: flex-start; margin-left: -13px; padding-top: 25px; }
.legend label { display: flex; align-items: center; }
.legend label + a { margin-bottom: 16px; }
.legend input { width: 13px; height: 13px; margin: 0 7px 3px 4px; accent-color: #0075ff; }
.red-label { color: #e8000b; }

/* taskbar */
.taskbar { display: grid; grid-template-columns: 1fr auto 1fr; align-items: center; flex: none; height: 48px; background: linear-gradient(90deg, #1c222c 0, #1c222c 16%, #12255a 19%, #10205c 30%, #141c6a 35%, #12264e 39%, #101f66 45%, #1c1d42 54%, #12235c 62%, #1a2033 72%, #1c222c 100%); }
.weather { display: flex; align-items: center; gap: 6px; padding-left: 19px; }
.weather small { color: #b9bcc4; font-size: 12px; }
.apps { display: flex; gap: 4px; }
.app { position: relative; width: 40px; height: 40px; border-radius: 4px; }
.active.app { background: #ffffff14; }
.app.active::after, .app.open::after { content: ""; position: absolute; bottom: 2px; left: 17px; width: 6px; height: 3px; border-radius: 2px; background: #9a9fb2; }
.app.active::after { left: 12px; width: 16px; background: #4cc2ff; }
.tray { display: flex; align-items: center; justify-content: flex-end; padding-right: 16px; }
.clock { text-align: right; }
.second .tray { padding-right: 20px; }
.lang { margin: 0 19px 0 20px; text-align: center; }
.status-icons { margin-right: 14px; }
.badge { width: 16px; height: 16px; margin-left: 11px; border-radius: 50%; background: #4cc2ff; color: #14202c; text-align: center; }

/* file explorer */
.second { padding: 189px 0 123px; background: #000; }
.explorer { display: flex; flex: 1; flex-direction: column; min-height: 0; background: #191919; color: #f2f2f2; }
.titlebar { display: flex; flex: none; align-items: center; height: 26px; padding-left: 4px; background: #202020; color: #b0b0b0; }
.titlebar > span { margin-left: 4px; }
.titlebar .win-controls { color: #8c8c8c; }
.commands { display: flex; flex: none; align-items: center; height: 51px; border-bottom: 1px solid #3a3a3a; background: #202020; }
.command { height: 32px; gap: 9px; font-weight: 600; }
.new { width: 100px; padding-left: 8px; border-right: 1px solid #363636; }
.chev { color: #a8a8a8; }
.icon-command { width: 48px; height: 32px; }
.new + .icon-command { margin-left: 2px; }
.faded { opacity: 0.4; }
.sort { width: 90px; border-left: 1px solid #363636; }
.view { width: 96px; border-right: 1px solid #363636; }
.more { width: 48px; height: 32px; }
.address-row { display: flex; flex: none; align-items: center; height: 55px; padding: 0 12px 0 4px; }
.nav-btn { width: 34px; height: 32px; }
.narrow { width: 30px; }
.path { display: flex; flex: 1; align-items: center; height: 34px; margin-left: 5px; padding: 0 0 0 8px; border: 1px solid #535353; }
.sep { margin: 0 6px 0 5px; }
.path-tool { width: 33px; height: 32px; }
.path .first { margin-left: auto; }
.search { display: flex; align-items: center; gap: 12px; width: 161px; height: 34px; margin-left: 13px; padding-left: 13px; border: 1px solid #535353; }
.search input { min-width: 0; flex: 1; padding: 0; border: 0; background: none; color: #fff; font: inherit; }
.search input::placeholder { color: #8a8a8a; }
.body { display: flex; flex: 1; min-height: 0; overflow: hidden; }
.side { flex: 0 0 138px; min-width: 0; padding: 10px 0 0 2px; }
.nav-item { display: flex; align-items: center; height: 32px; color: #fff; white-space: nowrap; }
.nav-item.active { height: 28px; margin: 2px 0; background: #333; }
.nav-item.gap { margin-top: 8px; }
.arrow { display: flex; flex: none; justify-content: flex-end; width: 18px; margin-right: 10px; }
.level1 .arrow { width: 26px; }
.arrow .right { color: #777; }
.nav-label { flex: 1; min-width: 0; margin-left: 5px; }
.pin { flex: none; }
.side-scroll { flex: 0 0 21px; padding: 17px 0 0 9px; border-right: 1px solid #2c2c2c; }
.side-scroll div { width: 2px; height: 421px; background: #9a9a9a; }
.list { flex: 1; padding: 0 0 0 15px; }
.list table { table-layout: fixed; width: 602px; border-spacing: 0; }
.c-name { width: 257px; }
.c-date { width: 144px; }
.c-type { width: 120px; }
.c-size { width: 81px; }
.list th { position: relative; height: 25px; padding: 0 7px; border-right: 1px solid #636363; color: #dcdcdc; font-weight: 400; text-align: left; }
.list th:first-child { padding-left: 16px; }
.sorted { position: absolute; left: 128px; top: -3px; color: #9a9a9a; }
.list tbody::before { content: ""; display: block; height: 4px; }
.list td { height: 31px; padding: 0 7px; border: 2px solid transparent; border-width: 2px 0; background-clip: padding-box; color: #dcdcdc; white-space: nowrap; }
.list td:first-child { padding-left: 4px; color: #fff; }
.list td:last-child { padding-right: 5px; border-right-width: 4px; text-align: right; }
.selected td { background-color: #333; }
.file { display: flex; align-items: center; gap: 4px; }
.status { display: flex; flex: none; align-items: center; height: 23px; padding: 0 6px 0 14px; background: #1c1c1c; }
.status i { width: 1px; height: 12px; margin: 0 11px 0 9px; background: #ddd; }
.view-modes { display: flex; gap: 4px; margin-left: auto; }
.view-modes button { height: 23px; }
.view-modes .on { width: 22px; border: 1px solid #8a8a8a; background: #5c5c5c; }
</style>
